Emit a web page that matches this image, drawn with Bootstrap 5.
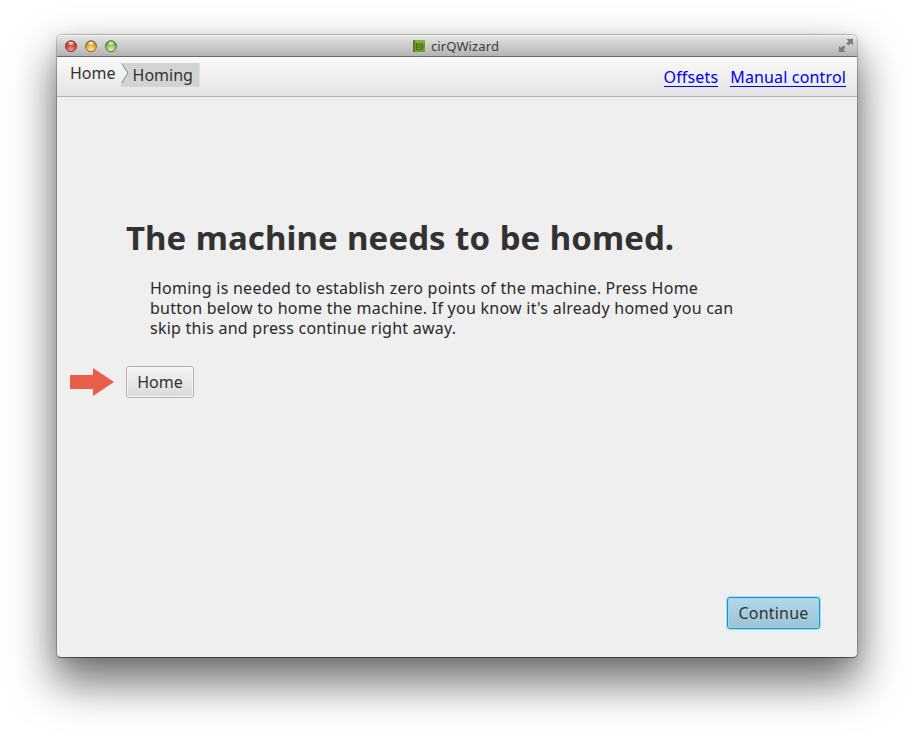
<!DOCTYPE html>
<html lang="en">
<head>
<meta charset="utf-8">
<title>cirQWizard</title>
<link href="https://cdn.jsdelivr.net/npm/bootstrap@5.3.0/dist/css/bootstrap.min.css" rel="stylesheet">
<style>
body{background:#fff;font-family:"Noto Sans","Open Sans",sans-serif;font-size:16px;line-height:20px;color:#323232;height:736px;overflow:hidden}
.window{width:800px;height:622px;margin:35px 0 0 57px;background:#efefef;border-radius:5px 5px 4px 4px;box-shadow:0 0 0 1px rgba(0,0,0,.22),0 1px 0 0 rgba(0,0,0,.35),0 23px 44px 3px rgba(0,0,0,.56),0 3px 14px rgba(0,0,0,.1)}
.titlebar{height:22px;background:linear-gradient(#e6e6e6,#cfcfcf 45%,#b3b3b3);border-bottom:1px solid #686868;border-radius:5px 5px 0 0;box-shadow:inset 0 1px 0 #f4f4f4;padding:0 4px 0 8px}
.app-name{font-size:13px;line-height:20px;color:#3c3c3c;letter-spacing:.12px}
.fullscreen{margin-left:44px}
.toolbar{height:40px;background:linear-gradient(#fafafa,#e4e4e4);border-bottom:1px solid #b2b2b2;padding:0 11px 0 13px}
.crumb{height:24px;margin-top:6px}
.crumb-home{line-height:20px}
.crumb-arrow{margin:0 -9px 0 5px;z-index:1}
.crumb-current{width:79px;padding-left:12px;line-height:24px;background:#d2d4d4;clip-path:polygon(1px 0,100% 0,100% 100%,0 100%,1px 20px,7.5px 10px)}
.links{margin-top:11px;gap:12px;letter-spacing:.15px}
.links a{color:#0000f0;text-decoration:none;border-bottom:1px solid #0000f0;line-height:18px;height:19px}
.content{padding:121px 0 0 69px}
h1{font-size:33px;line-height:40px;font-weight:700;margin:0;white-space:nowrap;letter-spacing:.06px;word-spacing:.8px}
.info{margin:20px 0 0 24px;white-space:nowrap;color:#292929;letter-spacing:.25px}
.homing-row{margin:28px 0 0 -56px;gap:12px}
.btn.plain,.btn.primary{font-size:16px;line-height:20px;height:32px;padding:5px 0;border-radius:3px;color:#323232}
.btn.plain{width:68px;border:1px solid #b0b0b0;background:linear-gradient(#f4f4f4,#dadada);box-shadow:inset 0 0 0 1px #f7f7f7}
.btn.primary{width:93px;letter-spacing:.2px;border:1px solid #039ed3;background:linear-gradient(#b2d9ea,#9bc2d5);box-shadow:0 0 0 1px #a9dced,inset 0 0 0 1px #a4d4e8}
.footer-row{padding:199px 37px 0 0}
</style>
<script src="https://cdn.jsdelivr.net/npm/bootstrap@5.3.0/dist/js/bootstrap.bundle.min.js"></script>
</head>
<body>
<div class="overflow-hidden h-100">
<main class="window">
  <header class="titlebar d-flex align-items-center justify-content-between">
    <svg width="54" height="14" viewBox="0 0 54 14">
      <defs>
        <radialGradient id="red" cx=".5" cy=".85" r=".8"><stop offset="0" stop-color="#ff9c93"/><stop offset=".5" stop-color="#d9534b"/><stop offset="1" stop-color="#a02c28"/></radialGradient>
        <radialGradient id="amber" cx=".5" cy=".85" r=".8"><stop offset="0" stop-color="#ffec8c"/><stop offset=".5" stop-color="#e8b94c"/><stop offset="1" stop-color="#a06d20"/></radialGradient>
        <radialGradient id="green" cx=".5" cy=".85" r=".8"><stop offset="0" stop-color="#d8ffa5"/><stop offset=".5" stop-color="#9bcd6e"/><stop offset="1" stop-color="#4d8430"/></radialGradient>
      </defs>
      <circle cx="6" cy="7.2" r="5.5" fill="url(#red)" stroke="#8c3b38"/>
      <circle cx="26" cy="7.2" r="5.5" fill="url(#amber)" stroke="#8e6a34"/>
      <circle cx="46" cy="7.2" r="5.5" fill="url(#green)" stroke="#54793f"/>
      <g fill="#fff" opacity=".7"><ellipse cx="6" cy="4.2" rx="2.7" ry="1.6"/><ellipse cx="26" cy="4.2" rx="2.7" ry="1.6"/><ellipse cx="46" cy="4.2" rx="2.7" ry="1.6"/></g>
    </svg>
    <div class="app-name d-flex align-items-center gap-1">
      <svg width="14" height="14" viewBox="0 0 14 14"><path d="M0 1h12v12H0z" fill="#6ea023"/><path d="M0 1h2v12H0z" fill="#557f1c"/><path d="M2 1h10v2.500H2z" fill="#83b52f"/><path d="M3.500 4v6.500h6V5.500h-6M3.500 8h6" fill="none" stroke="#446d14"/></svg>
      <span>cirQWizard</span>
    </div>
    <svg class="fullscreen" width="16" height="15" viewBox="0 0 16 15"><g fill="#7b7b7b"><path d="M9.500 1H16v6.500l-2.200-2.200-2.300 2.300-2.200-2.100 2.300-2.300z"/><path d="M2 8l2.200 1.700L6.500 7.500l2 2-2.300 2.300L8.500 14H2z"/></g></svg>
  </header>
  <nav class="toolbar d-flex justify-content-between">
    <div class="crumb d-flex">
      <span class="crumb-home">Home</span>
      <svg class="crumb-arrow" width="9" height="24" viewBox="0 0 9 24"><path d="M.7 .5l6.300 9.500L.7 20" fill="none" stroke="#858585"/></svg>
      <span class="crumb-current">Homing</span>
    </div>
    <div class="links d-flex"><a href="#">Offsets</a><a href="#">Manual control</a></div>
  </nav>
  <section class="content">
    <h1>The machine needs to be homed.</h1>
    <p class="info">Homing is needed to establish zero points of the machine. Press Home<br>button below to home the machine. If you know it's already homed you can<br>skip this and press continue right away.</p>
    <div class="homing-row d-flex align-items-center">
      <svg width="44" height="28" viewBox="0 0 44 28"><path d="M0 7h23V0l21 14-21 14v-7H0z" fill="#e95d4b"/></svg>
      <button type="button" class="btn plain">Home</button>
    </div>
  </section>
  <footer class="footer-row d-flex justify-content-end">
    <button type="button" class="btn primary">Continue</button>
  </footer>
</main>
</div>
</body>
</html>
